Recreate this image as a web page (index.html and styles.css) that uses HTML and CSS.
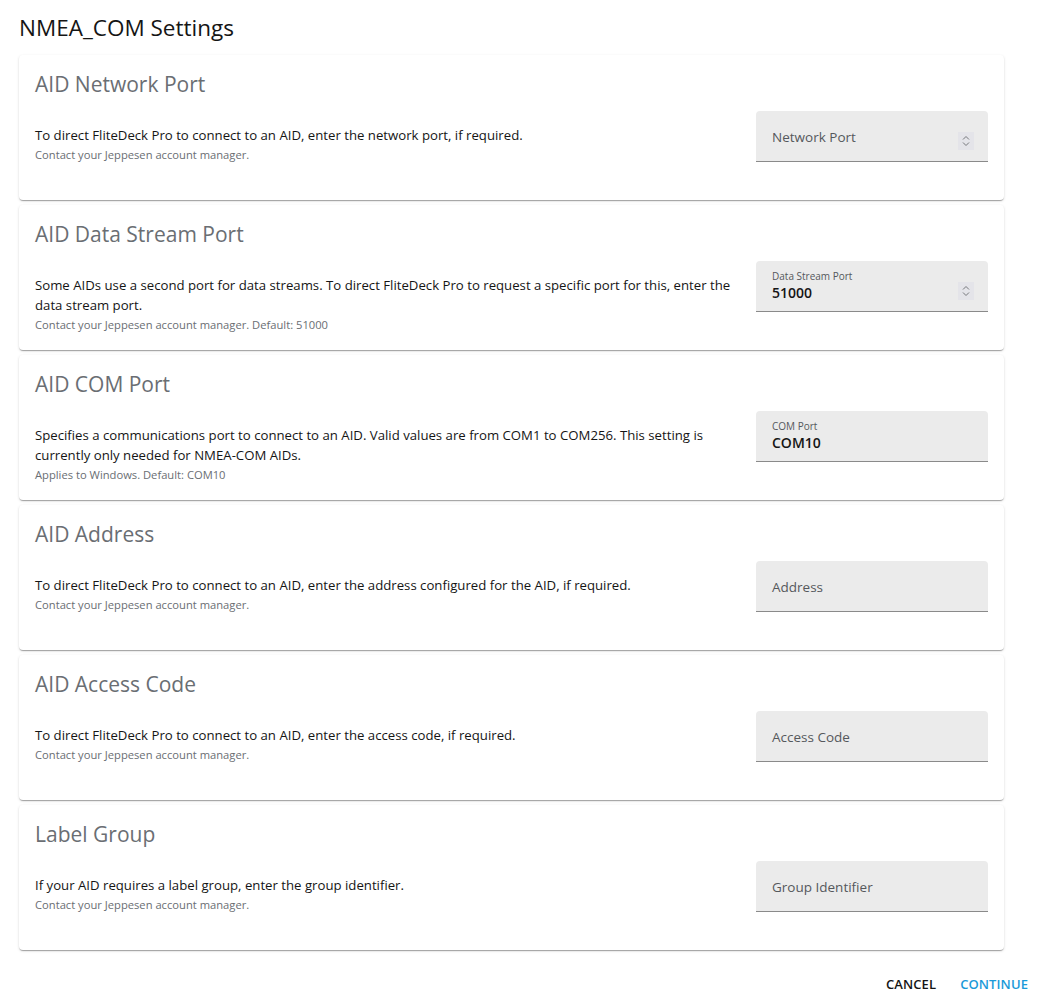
FILE: index.html
```html
<!DOCTYPE html>
<html lang="en">
<head>
    <meta charset="UTF-8">
    <title>NMEA_COM Settings</title>
    <link rel="stylesheet" href="styles.css">
</head>
<body>
    <h1 class="page-title">NMEA_COM Settings</h1>

    <!-- AID Network Port -->
    <div class="setting-card">
        <h2>AID Network Port</h2>
        <div class="setting-row">
            <div class="setting-text">
                <p class="desc">To direct FliteDeck Pro to connect to an AID, enter the network port, if required.</p>
                <p class="hint">Contact your Jeppesen account manager.</p>
            </div>
            <div class="field">
                <div class="field-box">
                    <span class="placeholder">Network Port</span>
                    <span class="spinner">
                        <svg width="8" height="12" viewBox="0 0 8 12"><path d="M1 4.5 L4 1.5 L7 4.5 M1 7.5 L4 10.5 L7 7.5" fill="none" stroke="#75777b" stroke-width="1"/></svg>
                    </span>
                </div>
            </div>
        </div>
    </div>

    <!-- AID Data Stream Port -->
    <div class="setting-card">
        <h2>AID Data Stream Port</h2>
        <div class="setting-row">
            <div class="setting-text">
                <p class="desc">Some AIDs use a second port for data streams. To direct FliteDeck Pro to request a specific port for this, enter the data stream port.</p>
                <p class="hint">Contact your Jeppesen account manager. Default: 51000</p>
            </div>
            <div class="field">
                <div class="field-box">
                    <div>
                        <span class="label">Data Stream Port</span>
                        <span class="value">51000</span>
                    </div>
                    <span class="spinner">
                        <svg width="8" height="12" viewBox="0 0 8 12"><path d="M1 4.5 L4 1.5 L7 4.5 M1 7.5 L4 10.5 L7 7.5" fill="none" stroke="#75777b" stroke-width="1"/></svg>
                    </span>
                </div>
            </div>
        </div>
    </div>

    <!-- AID COM Port -->
    <div class="setting-card">
        <h2>AID COM Port</h2>
        <div class="setting-row">
            <div class="setting-text">
                <p class="desc">Specifies a communications port to connect to an AID. Valid values are from COM1 to COM256. This setting is currently only needed for NMEA-COM AIDs.</p>
                <p class="hint">Applies to Windows. Default: COM10</p>
            </div>
            <div class="field">
                <div class="field-box">
                    <div>
                        <span class="label">COM Port</span>
                        <span class="value">COM10</span>
                    </div>
                </div>
            </div>
        </div>
    </div>

    <!-- AID Address -->
    <div class="setting-card">
        <h2>AID Address</h2>
        <div class="setting-row">
            <div class="setting-text">
                <p class="desc">To direct FliteDeck Pro to connect to an AID, enter the address configured for the AID, if required.</p>
                <p class="hint">Contact your Jeppesen account manager.</p>
            </div>
            <div class="field">
                <div class="field-box">
                    <span class="placeholder">Address</span>
                </div>
            </div>
        </div>
    </div>

    <!-- AID Access Code -->
    <div class="setting-card">
        <h2>AID Access Code</h2>
        <div class="setting-row">
            <div class="setting-text">
                <p class="desc">To direct FliteDeck Pro to connect to an AID, enter the access code, if required.</p>
                <p class="hint">Contact your Jeppesen account manager.</p>
            </div>
            <div class="field">
                <div class="field-box">
                    <span class="placeholder">Access Code</span>
                </div>
            </div>
        </div>
    </div>

    <!-- Label Group -->
    <div class="setting-card">
        <h2>Label Group</h2>
        <div class="setting-row">
            <div class="setting-text">
                <p class="desc">If your AID requires a label group, enter the group identifier.</p>
                <p class="hint">Contact your Jeppesen account manager.</p>
            </div>
            <div class="field">
                <div class="field-box">
                    <span class="placeholder">Group Identifier</span>
                </div>
            </div>
        </div>
    </div>

    <div class="actions">
        <button class="btn">Cancel</button>
        <button class="btn primary">Continue</button>
    </div>
</body>
</html>
```

FILE: styles.css
```css
:root {
    --text: #151515;
    --muted: #6a6e73;
    --field-bg: #ebebeb;
    --blue: #1a9ad9;
}

body {
    font-family: "Open Sans", "Noto Sans", sans-serif;
    margin: 0;
    padding: 13px 40px 0 19px;
    background: #fff;
    color: var(--text);
}

.page-title {
    font-size: 22.5px;
    font-weight: 400;
    line-height: 30px;
    margin: 0 0 12px;
}

.setting-card {
    background: #fff;
    border-radius: 4px;
    box-shadow: 0 2px 1px -1px rgba(0,0,0,0.2), 0 1px 1px 0 rgba(0,0,0,0.14), 0 1px 3px 0 rgba(0,0,0,0.12);
    padding: 13px 16px 17px;
    margin-bottom: 5px;
}

.setting-card h2 {
    font-size: 21px;
    font-weight: 400;
    line-height: 32px;
    color: var(--muted);
    margin: 0 0 11px;
}

.setting-row {
    display: flex;
    align-items: flex-start;
    gap: 20px;
}

.setting-text {
    flex: 1;
    padding-top: 14px;
}

.desc {
    font-size: 13.2px;
    line-height: 20px;
    margin: 0;
}

.hint {
    font-size: 11.2px;
    line-height: 16px;
    color: var(--muted);
    margin: 2px 0 0;
}

.field {
    width: 232px;
    flex-shrink: 0;
    padding-bottom: 21px;
}

.field-box {
    height: 50px;
    background: var(--field-bg);
    border-radius: 4px 4px 0 0;
    border-bottom: 1px solid #8a8a8a;
    display: flex;
    align-items: center;
    justify-content: space-between;
    padding: 0 16px;
}

.placeholder {
    font-size: 13.5px;
    color: #55585c;
    font-weight: 500;
    margin-top: 2px;
}

.label {
    display: block;
    font-size: 10px;
    color: #55585c;
    line-height: 14px;
}

.value {
    display: block;
    font-size: 14px;
    font-weight: 600;
    line-height: 20px;
    color: var(--text);
}

.spinner {
    width: 16px;
    height: 18px;
    background: #e4e4e9;
    display: flex;
    align-items: center;
    justify-content: center;
    margin-right: -2px;
    margin-top: 10px;
}

.actions {
    display: flex;
    justify-content: flex-end;
    gap: 24px;
    margin-top: 25px;
    margin-right: -24px;
}

.btn {
    background: none;
    border: none;
    font-family: inherit;
    font-size: 13px;
    font-weight: 600;
    text-transform: uppercase;
    color: var(--text);
    padding: 0;
    letter-spacing: 0.1px;
}

.btn.primary {
    color: var(--blue);
}
```
